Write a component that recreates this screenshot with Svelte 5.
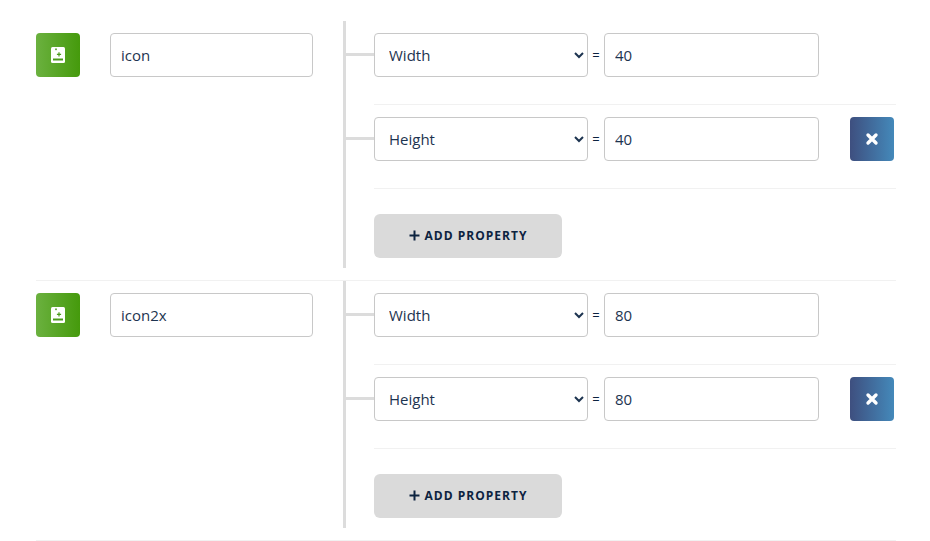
<script>
  const groups = [
    { name: 'icon', width: 40, height: 40 },
    { name: 'icon2x', width: 80, height: 80 }
  ];
</script>

{#snippet prop(label, value, removable)}
  <div class="prop">
    <div class="branch"></div>
    <div class="fields">
      <select class="control select">
        <option selected>{label}</option>
      </select>
      <span class="equals">=</span>
      <input class="control value" type="text" {value} />
      {#if removable}
        <button class="remove" type="button" aria-label="Remove">
          <svg width="14" height="14" viewBox="0 0 14 14">
            <path d="M3 3l8 8M11 3l-8 8" stroke="#fff" stroke-width="3.4" stroke-linecap="round" fill="none" />
          </svg>
        </button>
      {/if}
    </div>
  </div>
{/snippet}

<div class="page">
  {#each groups as group}
    <section class="group">
      <div class="head">
        <div class="badge">
          <svg width="14" height="16" viewBox="0 0 14 16">
            <rect width="14" height="16" rx="1.5" fill="#fff" />
            <path d="M2 11.5h10v2H2z" fill="#4a9a1c" />
            <path d="M8 5.2v4.2M5.9 7.3h4.2" stroke="#4a9a1c" stroke-width="1.2" fill="none" />
            <path d="M5 1.3v2M4 2.3h2" stroke="#4a9a1c" stroke-width="0.8" fill="none" />
          </svg>
        </div>
        <input class="control name" type="text" value={group.name} />
      </div>
      <div class="props">
        {@render prop('Width', group.width, false)}
        {@render prop('Height', group.height, true)}
        <button class="add" type="button">
          <svg width="11" height="11" viewBox="0 0 11 11">
            <path d="M5.5 0.5v10M0.5 5.5h10" stroke="#0c2340" stroke-width="2" fill="none" />
          </svg>
          ADD PROPERTY
        </button>
      </div>
    </section>
  {/each}
</div>

<style>
  :global(body) {
    background: #fff;
    font-family: 'Open Sans', sans-serif;
  }

  .page {
    width: 860px;
    margin-left: 36px;
    padding-top: 21px;
  }

  .group {
    display: flex;
    align-items: flex-start;
    padding-bottom: 12px;
    border-bottom: 1px solid #f1f1f1;
  }

  .head {
    display: flex;
    width: 307px;
    padding-top: 12px;
    gap: 30px;
  }

  .badge {
    width: 44px;
    height: 44px;
    flex: none;
    border-radius: 4px;
    background: linear-gradient(to right, #6bb13f, #459a0c);
    display: flex;
    align-items: center;
    justify-content: center;
  }

  .control {
    box-sizing: border-box;
    height: 44px;
    border: 1px solid #c8c8c8;
    border-radius: 4px;
    background: #fff;
    font-family: 'Open Sans', sans-serif;
    font-size: 15px;
    color: #1d3450;
    outline: none;
  }

  .name {
    width: 203px;
    padding: 0 10px;
  }

  .props {
    flex: 1;
    border-left: 3px solid #dcdcdc;
    padding: 12px 0 10px;
  }

  .prop {
    display: flex;
    align-items: flex-start;
  }

  .branch {
    width: 28px;
    height: 3px;
    margin-top: 20px;
    background: #dcdcdc;
    flex: none;
  }

  .fields {
    flex: 1;
    display: flex;
    align-items: center;
    height: 44px;
    padding-bottom: 27px;
    margin-bottom: 12px;
    border-bottom: 1px solid #f1f1f1;
  }

  .prop:nth-child(2) .fields {
    margin-bottom: 25px;
  }

  .select {
    width: 214px;
    padding: 0 6px 0 10px;
  }

  .equals {
    width: 16px;
    text-align: center;
    font-size: 13px;
    color: #0c2340;
  }

  .value {
    width: 215px;
    padding: 0 10px;
  }

  .remove {
    width: 44px;
    height: 44px;
    margin-left: 31px;
    padding: 0;
    border: none;
    border-radius: 4px;
    background: linear-gradient(to right, #3e4f7f, #4489ba);
    display: flex;
    align-items: center;
    justify-content: center;
  }

  .add {
    width: 188px;
    height: 44px;
    margin-left: 28px;
    padding: 0 0 2px;
    border: none;
    border-radius: 6px;
    background: #dadada;
    display: flex;
    align-items: center;
    justify-content: center;
    gap: 5px;
    font-family: 'Open Sans', sans-serif;
    font-size: 12px;
    font-weight: 700;
    letter-spacing: 1px;
    color: #0c2340;
  }
</style>
